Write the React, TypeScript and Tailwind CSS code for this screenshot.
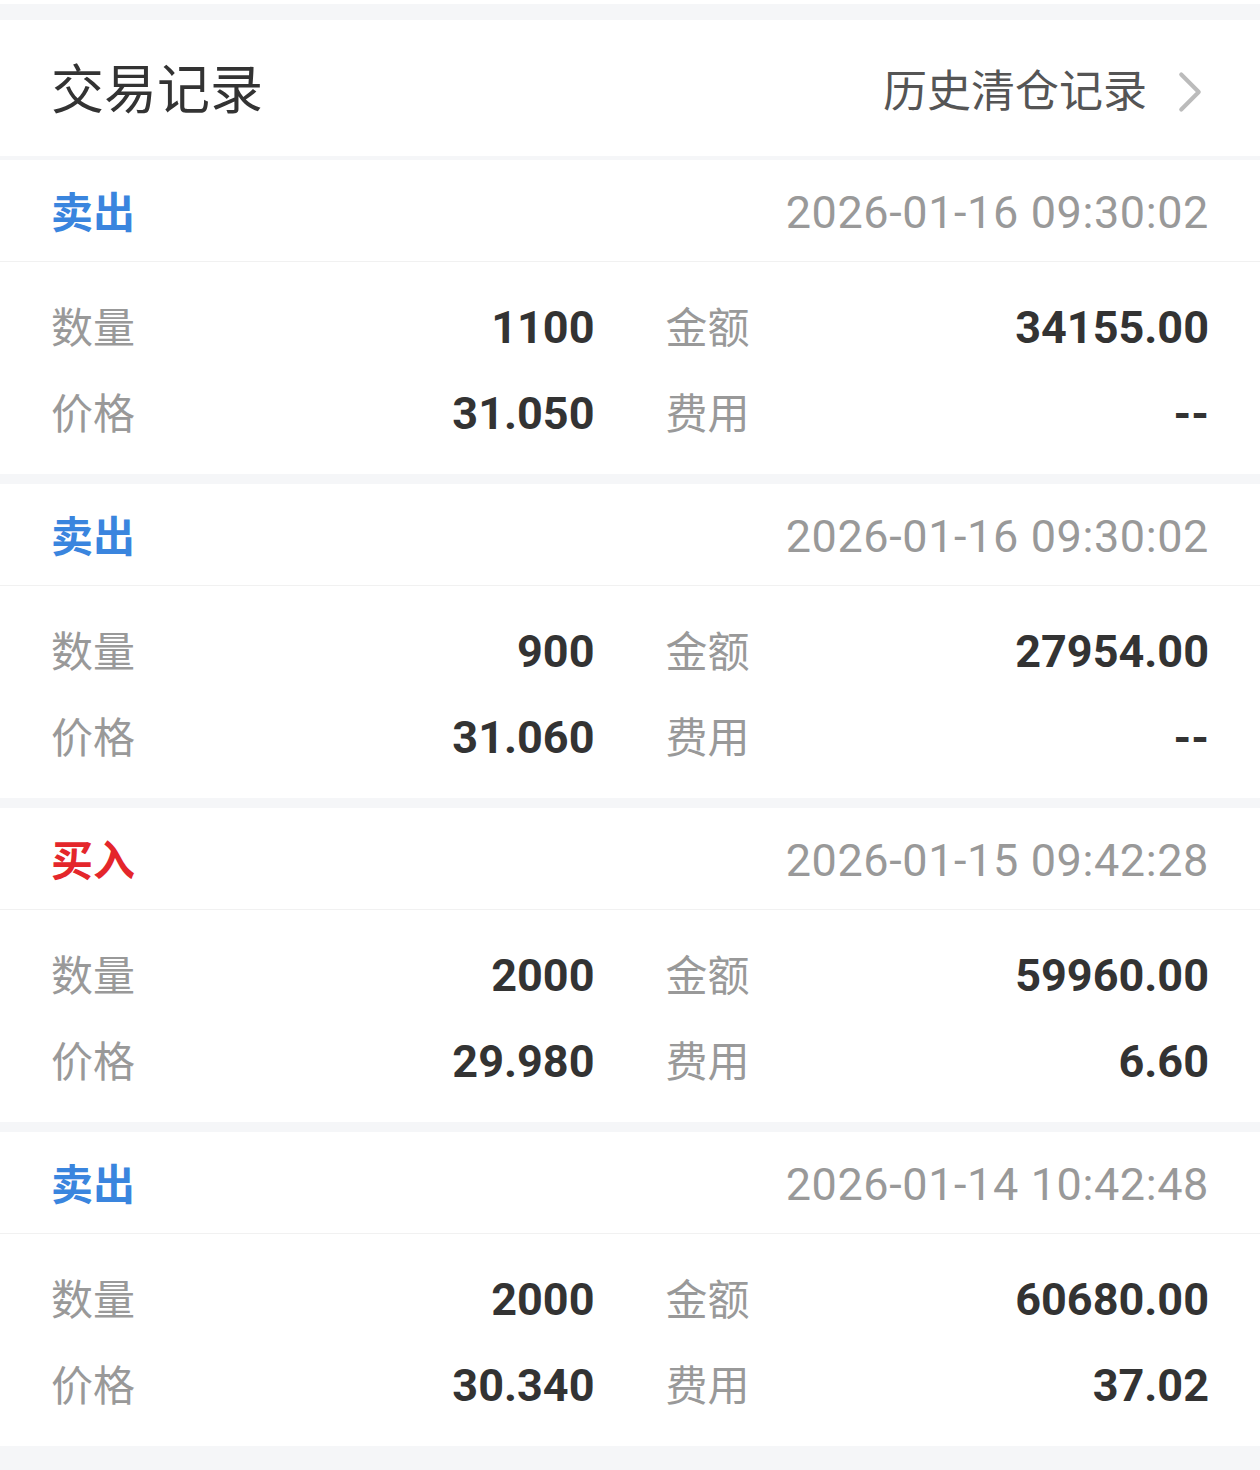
import { ChevronRight } from 'lucide-react';

type Trade = {
  side: 'buy' | 'sell';
  time: string;
  qty: string;
  amount: string;
  price: string;
  fee: string;
};

const trades: Trade[] = [
  { side: 'sell', time: '2026-01-16 09:30:02', qty: '1100', amount: '34155.00', price: '31.050', fee: '--' },
  { side: 'sell', time: '2026-01-16 09:30:02', qty: '900', amount: '27954.00', price: '31.060', fee: '--' },
  { side: 'buy', time: '2026-01-15 09:42:28', qty: '2000', amount: '59960.00', price: '29.980', fee: '6.60' },
  { side: 'sell', time: '2026-01-14 10:42:48', qty: '2000', amount: '60680.00', price: '30.340', fee: '37.02' },
];

const font = "font-['Roboto','Noto_Sans_CJK_SC',sans-serif]";

function Cell({ label, value }: { label: string; value: string }) {
  return (
    <div className="flex h-[86px] items-center justify-between">
      <span className="text-[42px] text-[#999999]">{label}</span>
      <span className="text-[45px] font-bold text-[#333333]">{value}</span>
    </div>
  );
}

function TradeCard({ trade }: { trade: Trade }) {
  return (
    <div className="bg-white">
      <div className="flex h-[102px] items-center justify-between border-b border-[#f1f1f1] px-[51px] pt-[5px]">
        <span className={trade.side === 'buy' ? 'text-[42px] font-bold text-[#e4262b]' : 'text-[42px] font-bold text-[#3a85de]'}>
          {trade.side === 'buy' ? '买入' : '卖出'}
        </span>
        <span className="text-[45px] tracking-[0.6px] text-[#999999]">{trade.time}</span>
      </div>
      <div className="grid grid-cols-2 gap-x-[71px] px-[51px] pb-[17px] pt-[23px]">
        <Cell label="数量" value={trade.qty} />
        <Cell label="金额" value={trade.amount} />
        <Cell label="价格" value={trade.price} />
        <Cell label="费用" value={trade.fee} />
      </div>
    </div>
  );
}

export default function App() {
  return (
    <div className={`${font} min-h-[1470px] w-[1260px] bg-[#f5f6f8] pb-[20px]`}>
      <div className="h-[4px] bg-white" />
      <div className="mt-[16px] flex h-[136px] items-center justify-between bg-white pl-[51px] pr-[35px] pt-[7px]">
        <span className="text-[53px] text-[#333333]">交易记录</span>
        <span className="flex items-center gap-[8px] text-[44px] text-[#555555]">
          历史清仓记录
          <ChevronRight size={70} strokeWidth={1.4} className="text-[#bbbbbb]" />
        </span>
      </div>
      <div className="mt-[4px] flex flex-col gap-[10px]">
        {trades.map((t, i) => (
          <TradeCard key={i} trade={t} />
        ))}
      </div>
    </div>
  );
}
